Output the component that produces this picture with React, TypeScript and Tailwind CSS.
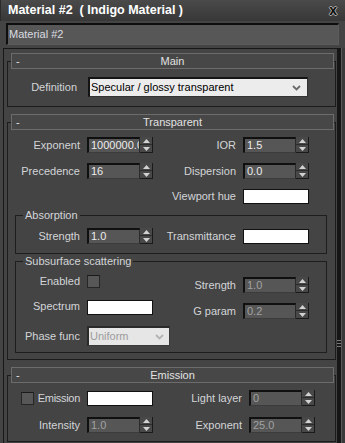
import React from 'react';

const ui = "font-['Liberation_Sans',Arial,sans-serif]";

// Small spinner arrows drawn as triangles
const Arrow = ({ up }: { up?: boolean }) => (
  <svg width="7" height="4" viewBox="0 0 7 4" className="block">
    {up ? <path d="M0 4 L3.5 0 L7 4 Z" fill="#d2d2d2" /> : <path d="M0 0 L3.5 4 L7 0 Z" fill="#d2d2d2" />}
  </svg>
);

const Spinner = ({ value, disabled = false }: { value: string; disabled?: boolean }) => (
  <div className="flex h-[16px] w-[66px] shrink-0">
    <div className="w-[53px] overflow-hidden whitespace-nowrap border-t-2 border-l-2 border-[#101010] border-r border-b border-r-[#2a2a2a] border-b-[#3c3c3c] bg-[#565656] pl-[2px] text-[11px] leading-[12px]">
      <span className={disabled ? 'text-[#a2a2a2]' : 'text-[#ececec]'}>{value}</span>
    </div>
    <div className="flex w-[13px] flex-col border-r border-b border-[#1a1a1a] bg-[#484848]">
      <div className="flex flex-1 items-center justify-center border-b border-[#2c2c2c]">
        <Arrow up />
      </div>
      <div className="flex flex-1 items-center justify-center">
        <Arrow />
      </div>
    </div>
  </div>
);

const Swatch = () => <div className="h-[15px] w-[66px] shrink-0 border border-[#111] bg-white" />;

const Check = () => (
  <div className="h-[13px] w-[13px] shrink-0 border border-[#262626] border-t-[#1a1a1a] bg-[#575757]" />
);

const Chevron = ({ color }: { color: string }) => (
  <svg width="9" height="6" viewBox="0 0 9 6" className="block">
    <path d="M1 1 L4.5 4.5 L8 1" fill="none" stroke={color} strokeWidth="1.8" />
  </svg>
);

const Label = ({ children, w, className = '' }: { children: React.ReactNode; w: string; className?: string }) => (
  <div className={`${w} shrink-0 whitespace-nowrap text-right text-[11px] leading-[13px] text-[#d3d5d8] ${className}`}>{children}</div>
);

const Rollout = ({ title, children, bodyClass }: { title: string; children: React.ReactNode; bodyClass: string }) => (
  <div className="flex flex-col">
    <div className="relative z-10 ml-[4px] mr-[2px] flex h-[16px] items-center border border-[#6c6c6c] bg-[#474747] text-[11px] leading-[13px] text-[#e2e2e2]">
      <span className="w-[10px] pl-[4px]">-</span>
      <span className="flex-1 pr-[10px] text-center">{title}</span>
    </div>
    <div className={`-mt-[8px] border border-[#1c1c1c] ${bodyClass}`}>{children}</div>
  </div>
);

const Group = ({ title, children, className }: { title: string; children: React.ReactNode; className: string }) => (
  <div className={`relative ml-[7px] mr-[8px] border border-[#1e1e1e] ${className}`}>
    <span className="absolute -top-[7px] left-[7px] bg-[#444444] px-[2px] text-[11px] leading-[13px] text-[#d3d5d8]">
      {title}
    </span>
    {children}
  </div>
);

export default function App() {
  return (
    <div className={`${ui} flex h-[443px] w-[345px] flex-col overflow-hidden bg-[#444444]`}>
      {/* Title bar */}
      <div className="flex h-[21px] shrink-0 items-center border-l border-[#2a2a2a] bg-gradient-to-b from-[#4a4a4a] to-[#383838] pl-[7px] pr-[8px]">
        <span className="flex-1 whitespace-pre text-[12.5px] font-bold leading-[15px] text-white">
          {'Material #2  ( Indigo Material )'}
        </span>
        <span className="text-[14px] font-bold leading-[13px] text-[#0c0c0c] [text-shadow:1px_0_0_#a8a8a8,-1px_0_0_#a8a8a8,0_1px_0_#a8a8a8,0_-1px_0_#a8a8a8]">
          x
        </span>
      </div>

      {/* Name field */}
      <div className="mt-[2px] px-[6px]">
        <div className="flex h-[22px] items-center border-t-2 border-l-2 border-[#0e0e0e] border-r border-b border-r-[#5c5c5c] border-b-[#5c5c5c] bg-[#575757] pl-[1px] text-[11px] leading-[13px] text-[#dadce0]">
          Material #2
        </div>
      </div>

      {/* Rollouts + scrollbar */}
      <div className="mt-[3px] flex flex-1 pl-[3px]">
        <div className="w-[334px] border-l border-t border-[#181818] pl-[3px] pr-[1px] pt-[4px]">
          {/* Main */}
          <Rollout title="Main" bodyClass="pt-[15px] pb-[9px]">
            <div className="flex items-center">
              <Label w="w-[69px]">Definition</Label>
              <div className="ml-[11px] flex h-[20px] w-[220px] items-center border-t-2 border-l-2 border-[#141414] border-r border-b border-r-[#333] border-b-[#333] bg-[#ececec] pl-[1px] pr-[6px]">
                <span className="flex-1 text-[11px] leading-[13px] text-black">Specular / glossy transparent</span>
                <Chevron color="#6a6a6a" />
              </div>
            </div>
          </Rollout>

          {/* Transparent */}
          <div className="mt-[7px]">
            <Rollout title="Transparent" bodyClass="pt-[14px] pb-[6px]">
              <div className="flex items-center">
                <Label w="w-[72px]">Exponent</Label>
                <div className="ml-[7px]">
                  <Spinner value="1000000.0" />
                </div>
                <Label w="w-[83px]">IOR</Label>
                <div className="ml-[7px]">
                  <Spinner value="1.5" />
                </div>
              </div>
              <div className="mt-[10px] flex items-center">
                <Label w="w-[72px]">Precedence</Label>
                <div className="ml-[7px]">
                  <Spinner value="16" />
                </div>
                <Label w="w-[83px]">Dispersion</Label>
                <div className="ml-[7px]">
                  <Spinner value="0.0" />
                </div>
              </div>
              <div className="mt-[10px] flex items-center">
                <div className="w-[145px]" />
                <Label w="w-[83px]">Viewport hue</Label>
                <div className="ml-[7px]">
                  <Swatch />
                </div>
              </div>

              <Group title="Absorption" className="mt-[11px] pt-[12px] pb-[9px]">
                <div className="flex items-center">
                  <Label w="w-[64px]">Strength</Label>
                  <div className="ml-[7px]">
                    <Spinner value="1.0" />
                  </div>
                  <Label w="w-[83px]">Transmittance</Label>
                  <div className="ml-[7px] mt-[1px]">
                    <Swatch />
                  </div>
                </div>
              </Group>

              <Group title="Subsurface scattering" className="mt-[7px] pt-[13px] pb-[6px]">
                <div className="flex items-start">
                  <Label w="w-[64px]">Enabled</Label>
                  <div className="ml-[7px] w-[66px]">
                    <Check />
                  </div>
                  <div className="mt-[2px] flex items-center">
                    <Label w="w-[83px]">Strength</Label>
                    <div className="ml-[7px]">
                      <Spinner value="1.0" disabled />
                    </div>
                  </div>
                </div>
                <div className="mt-[7px] flex items-start">
                  <Label w="w-[64px]">Spectrum</Label>
                  <div className="ml-[7px]">
                    <Swatch />
                  </div>
                  <div className="mt-[3px] flex items-center">
                    <Label w="w-[83px]">G param</Label>
                    <div className="ml-[7px]">
                      <Spinner value="0.2" disabled />
                    </div>
                  </div>
                </div>
                <div className="mt-[7px] flex items-center">
                  <Label w="w-[64px]">Phase func</Label>
                  <div className="ml-[7px] flex h-[20px] w-[83px] items-center border-t-2 border-l-2 border-[#2a2a2a] border-r border-b border-r-[#3a3a3a] border-b-[#3a3a3a] bg-[#e6e6e6] pl-[1px] pr-[5px]">
                    <span className="flex-1 text-[11px] leading-[13px] text-[#9c9c9c]">Uniform</span>
                    <Chevron color="#b4b4b4" />
                  </div>
                </div>
              </Group>
            </Rollout>
          </div>

          {/* Emission */}
          <div className="mt-[7px]">
            <Rollout title="Emission" bodyClass="pt-[14px] pb-[8px]">
              <div className="flex items-center">
                <div className="ml-[13px]">
                  <Check />
                </div>
                <Label w="w-[46px]" className="tracking-[-0.3px]">
                  Emission
                </Label>
                <div className="ml-[7px]">
                  <Swatch />
                </div>
                <Label w="w-[89px]">Light layer</Label>
                <div className="ml-[7px]">
                  <Spinner value="0" disabled />
                </div>
              </div>
              <div className="mt-[11px] flex items-center">
                <Label w="w-[72px]">Intensity</Label>
                <div className="ml-[7px]">
                  <Spinner value="1.0" disabled />
                </div>
                <Label w="w-[89px]">Exponent</Label>
                <div className="ml-[7px]">
                  <Spinner value="25.0" disabled />
                </div>
              </div>
            </Rollout>
          </div>
        </div>

        {/* Scrollbar strip */}
        <div className="flex w-[8px]">
          <div className="flex w-[4px] flex-col gap-[2px] bg-[#161616] pt-[292px]">
            <div className="h-px bg-[#7a7a7a]" />
            <div className="h-px bg-[#7a7a7a]" />
            <div className="h-px bg-[#7a7a7a]" />
          </div>
          <div className="w-px bg-[#5a5a5a]" />
          <div className="w-[3px] bg-[#3a3a3a]" />
        </div>
      </div>
    </div>
  );
}
